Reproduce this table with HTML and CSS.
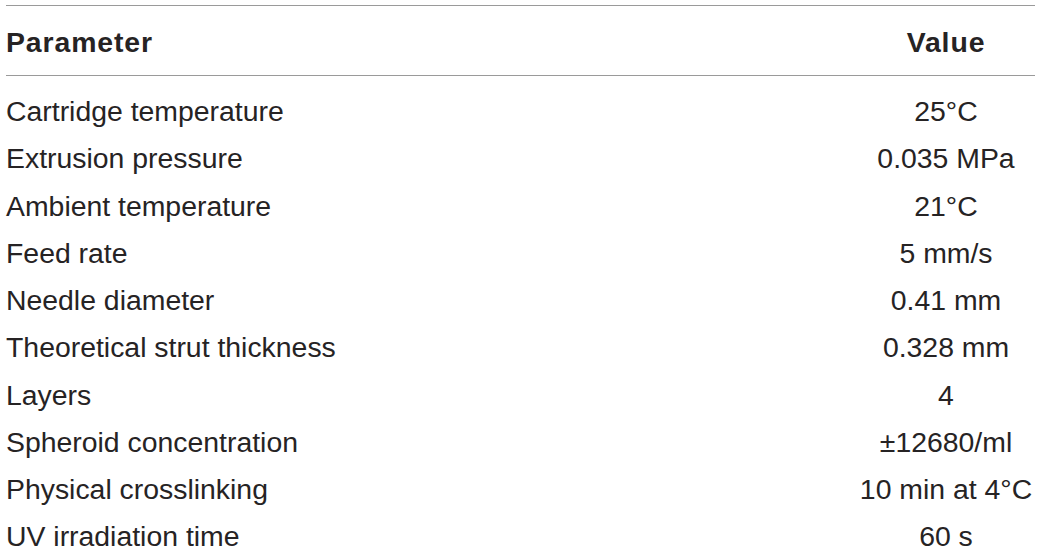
FILE: index.html
```html
<!DOCTYPE html>
<html>
<head>
<meta charset="utf-8">
<link rel="stylesheet" href="styles.css">
</head>
<body>
<div class="table">
  <div class="row head">
    <div class="cell param">Parameter</div>
    <div class="cell value">Value</div>
  </div>
  <div class="body">
    <div class="row"><div class="cell param">Cartridge temperature</div><div class="cell value">25°C</div></div>
    <div class="row"><div class="cell param">Extrusion pressure</div><div class="cell value">0.035 MPa</div></div>
    <div class="row"><div class="cell param">Ambient temperature</div><div class="cell value">21°C</div></div>
    <div class="row"><div class="cell param">Feed rate</div><div class="cell value">5 mm/s</div></div>
    <div class="row"><div class="cell param">Needle diameter</div><div class="cell value">0.41 mm</div></div>
    <div class="row"><div class="cell param">Theoretical strut thickness</div><div class="cell value">0.328 mm</div></div>
    <div class="row"><div class="cell param">Layers</div><div class="cell value">4</div></div>
    <div class="row"><div class="cell param">Spheroid concentration</div><div class="cell value">±12680/ml</div></div>
    <div class="row"><div class="cell param">Physical crosslinking</div><div class="cell value">10 min at 4°C</div></div>
    <div class="row"><div class="cell param">UV irradiation time</div><div class="cell value">60 s</div></div>
  </div>
</div>
</body>
</html>
```
FILE: styles.css
```css
html, body {
  margin: 0;
  padding: 0;
  background: #fff;
  overflow: hidden;
}
body {
  font-family: "Liberation Sans", Arial, sans-serif;
  font-size: 28.4px;
  color: #262324;
  padding-top: 5px;
}
.table {
  margin-left: 6px;
  width: 1029px;
  border-top: 1px solid #9a9a9a;
}
.row {
  display: grid;
  grid-template-columns: 1fr 178px;
  line-height: 47.26px;
}
.head {
  font-weight: bold;
  letter-spacing: 0.9px;
  line-height: 40px;
  padding-top: 16px;
  padding-bottom: 13px;
  border-bottom: 1px solid #9a9a9a;
}
.body {
  padding-top: 12px;
}
.cell.value {
  text-align: center;
}
```
